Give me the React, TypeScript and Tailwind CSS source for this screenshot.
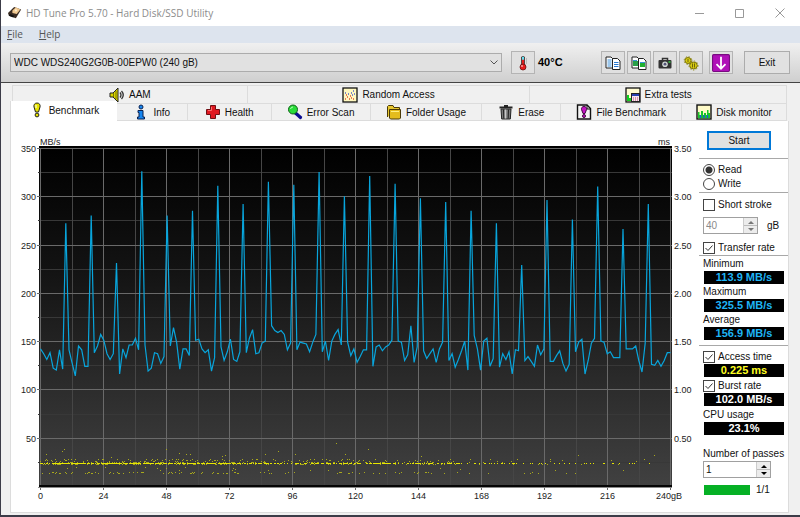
import { useState } from "react";
import type { ReactNode } from "react";

// transfer rate samples in MB/s, evenly spaced from 0 to 240 gB
const rates = [
    142, 137, 131, 138, 122, 120, 141, 121, 272, 141, 127, 114, 145, 141, 124, 124, 280, 138, 145, 157,
    151, 137, 131, 137, 231, 116, 142, 133, 146, 146, 153, 141, 326, 146, 119, 122, 138, 137, 127, 134,
    280, 145, 164, 149, 121, 142, 142, 135, 285, 151, 152, 142, 138, 141, 119, 133, 311, 144, 130, 139,
    152, 131, 129, 139, 292, 138, 153, 162, 137, 138, 148, 150, 315, 166, 161, 159, 161, 157, 141, 148,
    312, 141, 149, 148, 147, 139, 149, 157, 325, 139, 150, 130, 150, 157, 162, 146, 300, 149, 135, 142,
    128, 134, 141, 141, 321, 124, 144, 146, 140, 144, 146, 151, 313, 150, 149, 130, 136, 166, 128, 144,
    298, 140, 132, 137, 142, 128, 142, 149, 294, 130, 137, 123, 131, 140, 150, 120, 285, 156, 142, 120,
    150, 153, 124, 132, 272, 123, 137, 131, 139, 116, 141, 140, 229, 130, 134, 129, 124, 146, 136, 142,
    296, 129, 129, 135, 140, 127, 119, 126, 276, 139, 149, 152, 116, 130, 148, 153, 310, 150, 149, 137,
    139, 133, 133, 133, 266, 142, 142, 142, 145, 130, 118, 148, 292, 126, 125, 130, 124, 130, 138, 138,
];

// plot area
const LEFT = 40;
const TOP = 148;
const WIDTH = 630;
const HEIGHT = 338;
const gx = (i: number) => Math.round(LEFT + (i * WIDTH) / 20) + 0.5;
const gy = (i: number) => Math.round(TOP + (i * HEIGHT) / 14) + 0.5;

const ratePoints = rates
    .map((v, i) => `${(LEFT + 0.5 + (i * WIDTH) / (rates.length - 1)).toFixed(1)},${(TOP + ((350 - v) * HEIGHT) / 350).toFixed(1)}`)
    .join(" ");

// slow and fast accesses away from the main band
const strays = [
    [46, 454], [62, 451], [64, 449], [111, 457], [166, 449], [179, 453], [186, 454], [190, 454], [222, 456],
    [225, 455], [265, 454], [278, 451], [295, 454], [336, 443], [345, 454], [368, 449], [421, 456], [578, 455],
    [654, 455], [623, 470], [530, 473], [538, 473], [566, 473], [575, 473], [611, 460], [517, 459], [550, 459],
];

const accessDots = () => {
    let seed = 7;
    const rnd = () => {
        seed = (seed * 16807) % 2147483647;
        return seed / 2147483647;
    };
    const dots: number[][] = [];
    for (let x = LEFT; x < 650; x++) {
        const fade = x < 240 ? 0.98 : x < 360 ? 0.8 : x < 460 ? 0.68 : x < 520 ? 0.4 : 0.22;
        if (rnd() < 0.85 * fade) dots.push([x, 463]);
        if (rnd() < 0.34 * fade * fade) dots.push([x, 462]);
        if (rnd() < 0.3 * fade * fade) dots.push([x, 464]);
        if (rnd() < 0.36 * fade * fade) dots.push([x, 459 + Math.floor(rnd() * 3)]);
        if (rnd() < 0.28 * fade * fade) dots.push([x, 472 + Math.floor(rnd() * 2)]);
        if (rnd() < 0.05 * fade * fade) dots.push([x, 467 + Math.floor(rnd() * 4)]);
    }
    return dots.concat(strays);
};

const dots = accessDots();

const Chart = () => {
    return (
        <svg viewBox="11 121 688 391" className="block w-full h-auto font-['Liberation_Sans',sans-serif] text-[9px]" fill="#222" role="img" aria-label="Benchmark">
            <defs>
                <linearGradient id="plot" x1="0" y1="0" x2="0" y2="1">
                    <stop offset="0" stopColor="#000" />
                    <stop offset="0.35" stopColor="#121212" />
                    <stop offset="1" stopColor="#414141" />
                </linearGradient>
            </defs>
            <rect x="39" y="146" width="633" height="341" fill="url(#plot)" />
            <g stroke="#383838">
                {[1, 3, 5, 7, 9, 11, 13].map((i) => (
                    <line key={i} x1="38" x2="672" y1={gy(i)} y2={gy(i)} />
                ))}
                {[1, 3, 5, 7, 9, 11, 13, 15, 17, 19].map((i) => (
                    <line key={i} y1="148" y2="488" x1={gx(i)} x2={gx(i)} stroke="#464646" />
                ))}
            </g>
            <g stroke="#6a6a6a">
                {[0, 2, 4, 6, 8, 10, 12].map((i) => (
                    <line key={i} x1="37" x2="672" y1={gy(i)} y2={gy(i)} />
                ))}
                {[0, 2, 4, 6, 8, 10, 12, 14, 16, 18, 20].map((i) => (
                    <line key={i} y1="148" y2="490" x1={gx(i)} x2={gx(i)} />
                ))}
            </g>
            <rect x="39" y="485" width="633" height="2" fill="#050505" />
            <rect x="38" y="487" width="634" height="1" fill="#8a8a8a" />
            <polyline points={ratePoints} fill="none" stroke="#08a5dc" strokeWidth="1.2" />
            <g shapeRendering="crispEdges">
                {dots.map(([x, y], i) => (
                    <rect key={i} x={x} y={y} width="1" height="1" fill={y === 463 ? "#e6e600" : "#a8a81c"} />
                ))}
            </g>
            <text x="40" y="145">MB/s</text>
            <text x="670" y="145" textAnchor="end">ms</text>
            {[350, 300, 250, 200, 150, 100, 50].map((v, i) => (
                <text key={v} x="36" y={gy(i * 2) + 3} textAnchor="end">{v}</text>
            ))}
            {["3.50", "3.00", "2.50", "2.00", "1.50", "1.00", "0.50"].map((v, i) => (
                <text key={v} x="674" y={gy(i * 2) + 3}>{v}</text>
            ))}
            {[0, 24, 48, 72, 96, 120, 144, 168, 192, 216].map((v, i) => (
                <text key={v} x={gx(i * 2)} y="499" textAnchor="middle">{v}</text>
            ))}
            <text x="669" y="499" textAnchor="middle">240gB</text>
        </svg>
    );
};

const Icon = ({ children, size = "size-4" }: { children: ReactNode; size?: string }) => (
    <svg viewBox="0 0 16 16" className={`${size} shrink-0`} aria-hidden="true">
        {children}
    </svg>
);

const SpeakerIcon = () => (
    <Icon>
        <path d="M1 6h3l5-5v14L4 10H1z" fill="#d8d400" stroke="#222" strokeWidth="1" />
        <path d="M4.500 6v4M7 4v8" stroke="#777300" />
        <path d="M11 5.500q2 2.500 0 5M12.500 4q3.500 4 0 8" fill="none" stroke="#333" strokeWidth="1.300" />
    </Icon>
);

const ScatterIcon = () => (
    <Icon>
        <rect x="1" y="1" width="14" height="14" fill="#fff8c0" stroke="#111" strokeWidth="1.3" />
        <path d="M3 12h1M5 10h1M7 12h1M9 11h1M11 12h1M4 8h1M8 9h1" stroke="#e05030" strokeWidth="1.3" />
        <path d="M3 6h1M6 7h1M9 6h1M11 4h1M12 7h1M10 8h1" stroke="#5060c8" strokeWidth="1.3" />
    </Icon>
);

const ExtraIcon = () => (
    <Icon>
        <rect x="1" y="1" width="14" height="14" fill="#fffbd0" stroke="#111" strokeWidth="1.3" />
        <path d="M2 14V8h2v3h2v3z" fill="#10d020" />
        <rect x="6.500" y="6.500" width="8" height="8" fill="#f4e8f4" stroke="#222" />
        <path d="M7 8h7" stroke="#2840b0" strokeWidth="2" />
        <path d="M8 11h1M10 11h1M12 11h1M8 13h1M10 13h1M12 13h1" stroke="#c04060" />
    </Icon>
);

const BenchIcon = () => (
    <Icon>
        <path d="M8 1C5.500 1 4.500 3 5 5l1.500 5h3L11 5c.5-2-.5-4-3-4z" fill="#e8e400" stroke="#222" />
        <circle cx="8" cy="13" r="1.900" fill="#e8e400" stroke="#222" />
        <path d="M7 3v3" stroke="#fff" />
    </Icon>
);

const InfoIcon = () => (
    <Icon>
        <circle cx="8" cy="3" r="2" fill="#1686f0" stroke="#0a2050" />
        <path d="M5 6.500h5V13h1.500v2h-7v-2H6V8.500H5z" fill="#1686f0" stroke="#0a2050" />
    </Icon>
);

const HealthIcon = () => (
    <Icon>
        <path d="M5.500 1.500h5v4h4v5h-4v4h-5v-4h-4v-5h4z" fill="#e01820" stroke="#701014" />
        <path d="M6.500 3v3.500H3" fill="none" stroke="#ff7070" />
    </Icon>
);

const ScanIcon = () => (
    <Icon>
        <path d="M8.500 9l5 4.500" stroke="#0a0a90" strokeWidth="3.200" strokeLinecap="round" />
        <circle cx="6" cy="5.500" r="4.500" fill="#28dc38" stroke="#106018" />
        <path d="M3.500 5q.5-2 2.500-2" fill="none" stroke="#b8ffb8" />
    </Icon>
);

const FolderIcon = () => (
    <Icon>
        <path d="M1.500 13V2.500l1-1H7l1 2h5.500V6" fill="#e8c830" stroke="#4a3a08" />
        <path d="M3.500 5.500h11v8.500l-1 1h-9l-1-1z" fill="#e4bc1c" stroke="#4a3a08" />
        <path d="M5 7.500h8" stroke="#fff080" />
    </Icon>
);

const TrashIcon = () => (
    <Icon>
        <path d="M1.500 3.500h13M6 2h4" stroke="#222" strokeWidth="1.800" />
        <path d="M3 5h10l-.7 10H3.700z" fill="#777" stroke="#222" />
        <path d="M5.500 5.500l.3 9M10.500 5.500l-.3 9" stroke="#222" />
        <path d="M7.500 5.500v9" stroke="#c8c8c8" strokeWidth="1.500" />
    </Icon>
);

const FileBenchIcon = () => (
    <Icon>
        <path d="M1.500 1h9.500l3.500 3.500V15h-13z" fill="#f4f4f4" stroke="#111" strokeWidth="1.400" />
        <path d="M11 1v4h4" fill="none" stroke="#111" />
        <path d="M8 2.500C6 2.500 5.200 4 5.500 5.500L7 9.500h2l1.500-4C10.800 4 10 2.500 8 2.500z" fill="#c414c4" stroke="#400840" />
        <circle cx="8" cy="12" r="1.500" fill="#c414c4" stroke="#400840" />
    </Icon>
);

const MonitorIcon = () => (
    <Icon>
        <rect x="1" y="1" width="14" height="14" fill="#fffbc8" stroke="#111" strokeWidth="1.400" />
        <path d="M2 14.300V8h1.500v3H5V7h2v4h1V9h2v2h1V6h1.500v3H14v5.300z" fill="#18c828" />
        <path d="M4.500 14v-3M8 14v-3M11.500 14v-3" stroke="#1c58d8" strokeWidth="1.300" />
    </Icon>
);

const DriveIcon = () => (
    <Icon size="size-[14px]">
        <path d="M0 8L7 1l8 3-6 10-8-3z" fill="#3a2c22" />
        <path d="M5 5l4-3.500L14 4l-4 5-5-1z" fill="#f0c890" />
        <path d="M2 9l5 2-1 2-5-2z" fill="#111" />
        <circle cx="9" cy="5" r="1.200" fill="#fff0d0" />
    </Icon>
);

const ThermoIcon = () => (
    <Icon>
        <path d="M6.500 2q1.500-1.500 3 0v8h-3z" fill="#e02020" stroke="#333" strokeWidth=".8" />
        <path d="M7 1.800h2v3H7z" fill="#60e0f0" />
        <circle cx="8" cy="12" r="3" fill="#e81c1c" stroke="#611" strokeWidth=".8" />
        <circle cx="7" cy="11" r=".8" fill="#fff" />
        <path d="M11 4h1M11 6h1M11 8h1" stroke="#777" strokeWidth=".7" />
    </Icon>
);

const CopyTextIcon = () => (
    <Icon>
        <path d="M1 2h5l2 2v9H1z" fill="#fff" stroke="#222" />
        <path d="M2.500 5h4M2.500 7h4M2.500 9h4M2.500 11h4" stroke="#3c90d8" />
        <path d="M7.500 3.500h5l2.500 2.500v8.500H7.500z" fill="#fff" stroke="#222" />
        <path d="M9 7.500h4.500M9 9.500h4.500M9 11.500h4.500" stroke="#2878d0" strokeWidth="1.200" />
    </Icon>
);

const CopyImageIcon = () => (
    <Icon>
        <path d="M1 2h5l2 2v9H1z" fill="#fff" stroke="#222" />
        <path d="M2 6h5v5H2z" fill="#28a048" />
        <path d="M7.500 3.500h5l2.500 2.500v8.500H7.500z" fill="#fff" stroke="#222" />
        <path d="M9 8h5v4H9z" fill="#20b030" />
        <path d="M9 7.500h5M2 5.500h4" stroke="#3890d8" />
    </Icon>
);

const CameraIcon = () => (
    <Icon>
        <path d="M5.500 5V3.500h5V5" fill="none" stroke="#333" strokeWidth="1.500" />
        <rect x="1.500" y="5" width="13" height="8.500" rx="1" fill="#333" />
        <circle cx="8" cy="9.200" r="2.800" fill="#d0d8d4" />
        <circle cx="8" cy="9.200" r="1.400" fill="#557" />
        <path d="M11.500 7h2" stroke="#30d040" strokeWidth="1.500" />
    </Icon>
);

const OptionsIcon = () => (
    <Icon>
        <circle cx="5" cy="5.500" r="3" fill="#d8cc10" stroke="#7c7408" strokeWidth="1" />
        <circle cx="5" cy="5.500" r="3.800" fill="none" stroke="#8c840c" strokeDasharray="1.500 1.500" />
        <ellipse cx="10.500" cy="10.500" rx="3.800" ry="3.400" fill="#d8cc10" stroke="#7c7408" strokeWidth="1" />
        <circle cx="10.500" cy="10.500" r="4.500" fill="none" stroke="#8c840c" strokeDasharray="1.500 1.500" />
        <path d="M5 4v3M9.500 8.500v4M11.500 8.500v4" stroke="#6c6408" />
    </Icon>
);

const DownIcon = () => (
    <Icon size="size-[18px]">
        <rect x=".5" y=".5" width="15" height="15" rx="1" fill="#b010b8" stroke="#780c80" />
        <path d="M8 2.500v10M4 9l4 4 4-4" fill="none" stroke="#fff" strokeWidth="1.600" />
    </Icon>
);

const ToolButton = ({ label, children }: { label: string; children: ReactNode }) => (
    <button aria-label={label} className="w-6 h-[23px] flex items-center justify-center shrink-0 border border-[#b4b4b4] bg-[#e0e0e0]">
        {children}
    </button>
);

const upperTabs = [
    { name: "AAM", icon: <SpeakerIcon /> },
    { name: "Random Access", icon: <ScatterIcon /> },
    { name: "Extra tests", icon: <ExtraIcon /> },
];

const lowerTabs = [
    { name: "Info", icon: <InfoIcon /> },
    { name: "Health", icon: <HealthIcon /> },
    { name: "Error Scan", icon: <ScanIcon /> },
    { name: "Folder Usage", icon: <FolderIcon /> },
    { name: "Erase", icon: <TrashIcon /> },
    { name: "File Benchmark", icon: <FileBenchIcon /> },
    { name: "Disk monitor", icon: <MonitorIcon /> },
];

const Check = ({ label, checked = false }: { label: string; checked?: boolean }) => {
    const [on, setOn] = useState(checked);
    return (
        <label className="h-[14px] pl-1 flex items-center gap-[3px] whitespace-nowrap">
            <span className="relative size-3 shrink-0">
                <input type="checkbox" checked={on} onChange={() => setOn(!on)} className="block appearance-none size-3 border border-[#444] bg-white" />
                {on && (
                    <svg viewBox="0 0 12 12" className="absolute inset-0 pointer-events-none" fill="none" stroke="#333">
                        <path d="M2.500 6l2.500 2.500L9.500 3.500" />
                    </svg>
                )}
            </span>
            {label}
        </label>
    );
};

const Radio = ({ label, checked = false }: { label: string; checked?: boolean }) => (
    <label className="h-[14px] pl-1 flex items-center gap-[3px]">
        <input
            type="radio"
            name="mode"
            defaultChecked={checked}
            className="appearance-none size-3 shrink-0 rounded-full border border-[#444] bg-white checked:bg-[radial-gradient(circle,#333_3px,#fff_4px)]"
        />
        {label}
    </label>
);

const Value = ({ children, color }: { children: ReactNode; color: string }) => (
    <div className={`h-[13px] ml-[5px] mr-1 bg-black text-center font-bold text-[11px] leading-[13px] ${color}`}>{children}</div>
);

const Spin = ({ label, value, disabled = false, width }: { label: string; value: string; disabled?: boolean; width: string }) => (
    <div className={`${width} h-[17px] flex border border-[#a0a0a0] bg-white`}>
        <input aria-label={label} defaultValue={value} disabled={disabled} className="min-w-0 flex-1 px-[2px] disabled:text-[#8a8a8a]" />
        <div className="w-[14px] flex flex-col border-l border-[#ccc] bg-[#ececec]">
            <button aria-label="Increase" disabled={disabled} className="flex-1 flex items-center justify-center border-b border-[#bbb] text-black disabled:text-[#777]">
                <svg viewBox="0 0 6 4" className="w-[6px] h-1" fill="currentColor"><path d="M0 4l3-3 3 3z" /></svg>
            </button>
            <button aria-label="Decrease" disabled={disabled} className="flex-1 flex items-center justify-center text-black disabled:text-[#777]">
                <svg viewBox="0 0 6 4" className="w-[6px] h-1" fill="currentColor"><path d="M0 0l3 3 3-3z" /></svg>
            </button>
        </div>
    </div>
);

const SidePanel = () => {
    return (
        <aside className="w-[89px] shrink-0 pt-[10px] leading-[14px]">
            <button className="block w-16 h-[19px] ml-2 border-2 border-[#0078d7] bg-[#e1e1e1] leading-[15px]">Start</button>
            <hr className="mt-2 mb-1 border-[#a8a8a8]" />
            <Radio label="Read" checked />
            <Radio label="Write" />
            <hr className="mt-px mb-[5px] border-[#a8a8a8]" />
            <Check label="Short stroke" />
            <div className="mt-[5px] mb-[7px] pl-1 flex items-center gap-[9px]">
                <Spin label="Short stroke size" value="40" disabled width="w-[55px]" />
                gB
            </div>
            <Check label="Transfer rate" checked />
            <hr className="mb-px border-[#a8a8a8]" />
            <div className="flex flex-col gap-px">
                <div>
                    <div className="pl-1">Minimum</div>
                    <Value color="text-[#1eb4f5]">113.9 MB/s</Value>
                </div>
                <div>
                    <div className="pl-1">Maximum</div>
                    <Value color="text-[#1eb4f5]">325.5 MB/s</Value>
                </div>
                <div>
                    <div className="pl-1">Average</div>
                    <Value color="text-[#1eb4f5]">156.9 MB/s</Value>
                </div>
            </div>
            <hr className="mt-[5px] mb-1 border-[#a8a8a8]" />
            <div className="flex flex-col gap-[2px]">
                <div>
                    <Check label="Access time" checked />
                    <Value color="text-[#ffff20]">0.225 ms</Value>
                </div>
                <div>
                    <Check label="Burst rate" checked />
                    <Value color="text-white">102.0 MB/s</Value>
                </div>
                <div>
                    <div className="pl-1">CPU usage</div>
                    <Value color="text-white">23.1%</Value>
                </div>
            </div>
            <div className="mt-3 pl-1 whitespace-nowrap">Number of passes</div>
            <div className="pl-1">
                <Spin label="Number of passes" value="1" width="w-[68px]" />
            </div>
            <div className="mt-[5px] pl-[5px] flex items-center gap-[6px]">
                <div className="w-[46px] h-[10px] bg-[#06b025]"></div>
                1/1
            </div>
        </aside>
    );
};

const App = () => {
    return (
        <div className="min-h-screen flex flex-col border-l border-b-2 border-[#3c3c48] bg-[#f0f0f0] text-[#111] text-[10px] font-['Liberation_Sans',sans-serif]">
            <header className="h-[26px] pl-[7px] flex items-center bg-white font-['Open_Sans',sans-serif] text-[#8c8c8c]">
                <DriveIcon />
                <h1 className="ml-1 flex-1">HD Tune Pro 5.70 - Hard Disk/SSD Utility</h1>
                <button aria-label="Minimize" className="w-10 h-full flex items-center justify-center">
                    <svg viewBox="0 0 10 10" className="size-[10px]" stroke="#999"><path d="M0 5.500h9" /></svg>
                </button>
                <button aria-label="Maximize" className="w-10 h-full flex items-center justify-center">
                    <svg viewBox="0 0 10 10" className="size-[10px]" stroke="#999" fill="none"><path d="M.5 1.500h8v8h-8z" /></svg>
                </button>
                <button aria-label="Close" className="w-10 h-full flex items-center justify-center">
                    <svg viewBox="0 0 10 10" className="size-[10px]" stroke="#999"><path d="M.5.5l9 9M9.500.5l-9 9" /></svg>
                </button>
            </header>
            <nav className="h-[17px] pl-[6px] flex items-center gap-4 bg-[#dde4ee] font-['Open_Sans',sans-serif] text-[#555]">
                <button><span className="underline">F</span>ile</button>
                <button><span className="underline">H</span>elp</button>
            </nav>
            <div className="h-10 pl-[9px] pr-[10px] flex items-center bg-linear-to-b from-[#f0f0f0] to-[#cfcfcf] border-b border-[#444]">
                <div className="relative flex-1">
                    <select aria-label="Drive" className="block w-full h-[19px] pl-[3px] appearance-none border border-[#acacac] bg-[#e1e1e1]">
                        <option>WDC WDS240G2G0B-00EPW0 (240 gB)</option>
                    </select>
                    <svg viewBox="0 0 8 5" className="absolute right-1 top-[7px] w-2 h-[5px] pointer-events-none" fill="none" stroke="#555"><path d="M.5.5L4 4 7.500.5" /></svg>
                </div>
                <div className="ml-[9px] w-[90px] flex items-center gap-[3px]">
                    <ToolButton label="Temperature"><ThermoIcon /></ToolButton>
                    <span className="font-bold text-[11px] text-black">40°C</span>
                </div>
                <div className="flex gap-[2px]">
                    <ToolButton label="Copy text"><CopyTextIcon /></ToolButton>
                    <ToolButton label="Copy screenshot"><CopyImageIcon /></ToolButton>
                    <ToolButton label="Save screenshot"><CameraIcon /></ToolButton>
                    <ToolButton label="Options"><OptionsIcon /></ToolButton>
                </div>
                <div className="ml-[6px] mr-[11px]">
                    <ToolButton label="Minimize to tray"><DownIcon /></ToolButton>
                </div>
                <button className="w-[46px] h-[23px] border border-[#acacac] bg-[#e1e1e1]">Exit</button>
            </div>
            <main className="flex-1 pt-[2px] pl-[9px] pr-[11px] pb-[2px] flex flex-col">
                <div className="mx-[2px] h-[18px] grid grid-cols-[235fr_283fr_257fr] border-l border-t border-[#dcdcdc]">
                    {upperTabs.map((tab) => (
                        <button key={tab.name} className="min-w-0 flex items-center justify-center gap-1 border-r border-[#dcdcdc] whitespace-nowrap">
                            {tab.icon}
                            {tab.name}
                        </button>
                    ))}
                </div>
                <div className="mr-[2px] grid grid-rows-[18px] grid-cols-[107fr_71fr_84fr_99fr_112fr_79fr_121fr_105fr] items-end">
                    <button className="min-w-0 h-5 pb-[2px] flex items-center justify-center gap-1 border-l border-[#dcdcdc] bg-white whitespace-nowrap">
                        <BenchIcon />
                        Benchmark
                    </button>
                    {lowerTabs.map((tab) => (
                        <button key={tab.name} className="min-w-0 h-[18px] flex items-center justify-center gap-1 border-t border-r border-b border-[#dcdcdc] whitespace-nowrap">
                            {tab.icon}
                            {tab.name}
                        </button>
                    ))}
                </div>
                <section className="flex-1 flex items-start border-l border-r border-b border-[#dcdcdc] bg-white">
                    <div className="flex-1 min-w-0">
                        <Chart />
                    </div>
                    <SidePanel />
                </section>
            </main>
        </div>
    );
};

export default App;
